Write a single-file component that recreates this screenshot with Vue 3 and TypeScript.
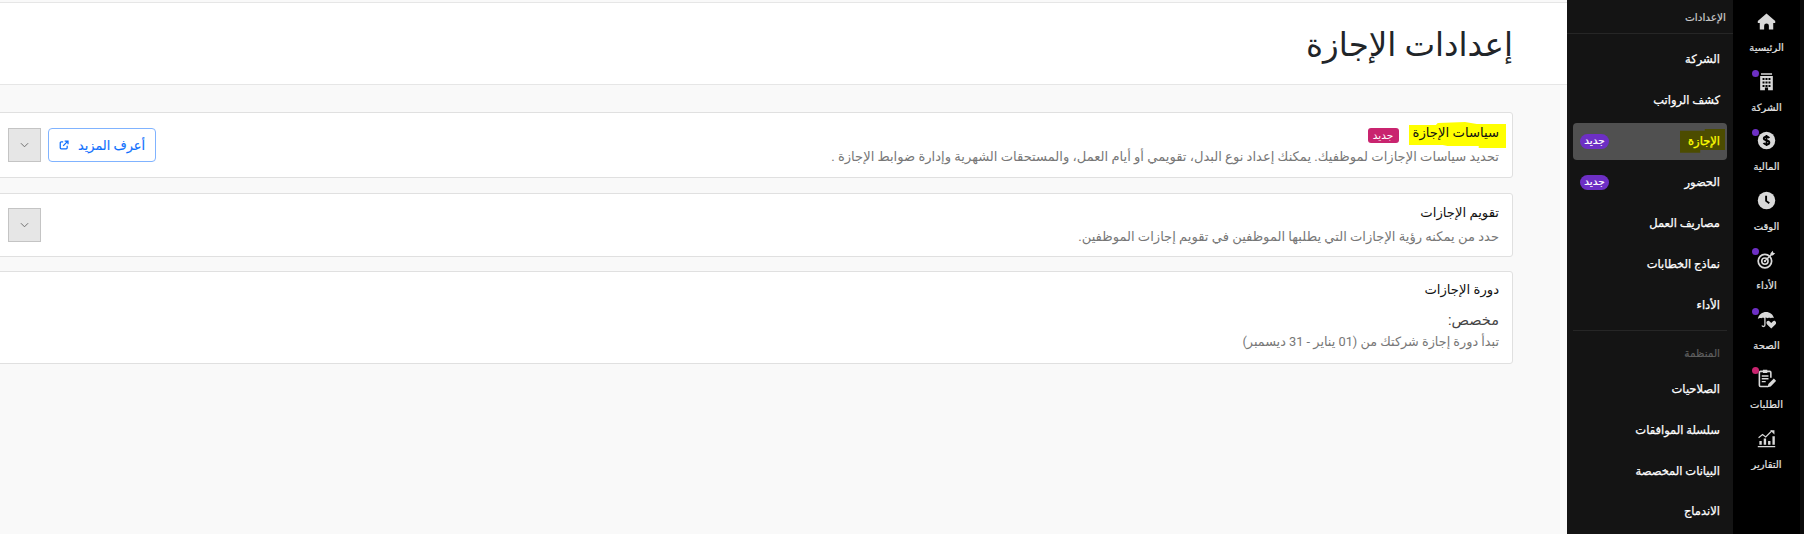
<template>
  <div class="page">
    <aside class="rail">
      <a v-for="item in railItems" :key="item.label" class="rail-item">
        <span v-if="item.dot" class="rail-dot" :class="'rail-dot--' + item.dot" />
        <svg class="rail-icon" viewBox="0 0 24 24" v-html="item.icon" />
        <span class="rail-label">{{ item.label }}</span>
      </a>
    </aside>

    <nav class="sub-nav">
      <div class="sub-nav__title">الإعدادات</div>
      <div class="sub-nav__group">
        <a
          v-for="link in mainLinks"
          :key="link.label"
          class="sub-nav__link"
          :class="{ 'sub-nav__link--active': link.active }"
        >
          <i v-if="link.active" class="sub-nav__mark" />
          <span class="sub-nav__label">{{ link.label }}</span>
          <span v-if="link.isNew" class="pill">جديد</span>
        </a>
      </div>
      <div class="sub-nav__divider" />
      <div class="sub-nav__heading">المنظمة</div>
      <a v-for="link in orgLinks" :key="link" class="sub-nav__link">
        <span class="sub-nav__label">{{ link }}</span>
      </a>
    </nav>

    <main class="content">
      <header class="content__header">
        <h1>إعدادات الإجازة</h1>
      </header>

      <section class="cards">
        <article class="card card--policies">
          <div class="card__body">
            <div class="card__title-row">
              <span class="card__title">
                <i class="card__mark" />
                <span class="card__title-text">سياسات الإجازة</span>
              </span>
              <span class="badge">جديد</span>
            </div>
            <p class="card__desc">
              تحديد سياسات الإجازات لموظفيك. يمكنك إعداد نوع البدل، تقويمي أو أيام العمل، والمستحقات الشهرية وإدارة ضوابط الإجازة .
            </p>
          </div>
          <div class="card__actions">
            <button class="btn-more">
              أعرف المزيد
              <svg viewBox="0 0 12 12" class="btn-more__icon">
                <path d="M5 2.2H2.6A1.1 1.1 0 0 0 1.5 3.3v6.1a1.1 1.1 0 0 0 1.1 1.1h6.1a1.1 1.1 0 0 0 1.1-1.1V7" fill="none" stroke="currentColor" stroke-width="1.5" />
                <path d="M5 7.1 10 2M6.8 1.2h4v4" fill="none" stroke="currentColor" stroke-width="1.5" />
              </svg>
            </button>
            <button class="btn-toggle">
              <svg viewBox="0 0 10 6"><path d="M1 1l4 4 4-4" fill="none" stroke="currentColor" stroke-width="1.1" /></svg>
            </button>
          </div>
        </article>

        <article class="card">
          <div class="card__body">
            <div class="card__title-row">
              <span class="card__title">تقويم الإجازات</span>
            </div>
            <p class="card__desc">حدد من يمكنه رؤية الإجازات التي يطلبها الموظفين في تقويم إجازات الموظفين.</p>
          </div>
          <div class="card__actions">
            <button class="btn-toggle">
              <svg viewBox="0 0 10 6"><path d="M1 1l4 4 4-4" fill="none" stroke="currentColor" stroke-width="1.1" /></svg>
            </button>
          </div>
        </article>

        <article class="card card--cycle">
          <div class="card__title-row">
            <span class="card__title">دورة الإجازات</span>
          </div>
          <div class="card__sub">مخصص:</div>
          <p class="card__desc">تبدأ دورة إجازة شركتك من (01 يناير - 31 ديسمبر)</p>
        </article>
      </section>
    </main>
  </div>
</template>

<script setup lang="ts">
interface RailItem {
  label: string
  icon: string
  dot?: 'purple' | 'pink'
}

interface NavLink {
  label: string
  active?: boolean
  isNew?: boolean
}

const railItems: RailItem[] = [
  { label: 'الرئيسية', icon: '<path fill="currentColor" d="M12 2 1 11.5V14h2.500v8H9v-4.500a3 3 0 0 1 6 0V22h5.500v-8H23v-2.500z"/>' },
  {
    label: 'الشركة',
    dot: 'purple',
    icon: '<path fill="currentColor" fill-rule="evenodd" d="M5 1.500h14v2H5zM4 5h16v18h-6v-3.500h-4V23H4zm3 2.500v2.500h2.500V7.500zm3.700 0v2.500h2.600V7.500zm3.800 0v2.500H17V7.500zM7 12v2.500h2.500V12zm3.700 0v2.500h2.600V12zm3.800 0v2.500H17V12zM7 16.500V19h2.500v-2.500zm7.500 0V19H17v-2.500zm-3.800 0V19h2.600v-2.500z"/>'
  },
  {
    label: 'المالية',
    dot: 'purple',
    icon: '<circle cx="12" cy="12" r="11" fill="currentColor"/><path fill="none" stroke="#000" stroke-width="2.400" d="M15.500 8.800c-.6-1.100-1.900-1.600-3.500-1.600-2 0-3.400 1-3.400 2.400 0 3.200 7 1.600 7 4.800 0 1.400-1.500 2.400-3.600 2.400-1.700 0-3-.6-3.700-1.800M12 5v14"/>'
  },
  {
    label: 'الوقت',
    icon: '<circle cx="12" cy="12" r="11" fill="currentColor"/><path fill="none" stroke="#000" stroke-width="2.400" d="M11.500 6v6.500l4 3"/>'
  },
  {
    label: 'الأداء',
    dot: 'purple',
    icon: '<g fill="none" stroke="currentColor"><circle cx="10" cy="14" r="8.500" stroke-width="2.200"/><circle cx="10" cy="14" r="4" stroke-width="2"/><path stroke-width="1.800" d="M10 14 19 5"/></g><path fill="currentColor" d="m17 4 3-3 .5 2.500L23 4l-3 3-3-.5z"/><circle cx="10" cy="14" r="1.500" fill="currentColor"/>'
  },
  {
    label: 'الصحة',
    dot: 'purple',
    icon: '<path fill="currentColor" d="M1 11.500C2 5.500 7 2.500 11.500 2.500s9 3 10 8c-1.200-.8-2.800-.8-4 0-1.200-.8-2.800-.8-4 0-1.200-.8-2.800-.8-4 0-1.200-.8-2.800-.8-4 0-1.200-.8-3.300-.2-4.500 1z"/><path fill="none" stroke="currentColor" stroke-width="1.600" d="M10 10v9c0 2.200-2.800 2.500-3.800.5"/><path fill="currentColor" d="M18 23.500l-5.200-5.200c-2.600-2.700 1-6.300 3.300-3.800l1.900 1.800 1.900-1.800c2.300-2.500 5.900 1.100 3.300 3.800z"/>'
  },
  {
    label: 'الطلبات',
    dot: 'pink',
    icon: '<path fill="none" stroke="currentColor" stroke-width="2" d="M14 22H4.500A1.500 1.500 0 0 1 3 20.500v-16A1.500 1.500 0 0 1 4.500 3H16a1.500 1.500 0 0 1 1.500 1.500V11"/><path fill="currentColor" d="M7.500 1h5.500v4H7.500zM6 8h8.500v1.800H6zM6 11.500h8.500v1.800H6zM6 15h5v1.800H6zM13.500 23l.8-4 7-7 3 3-7 7z"/>'
  },
  {
    label: 'التقارير',
    icon: '<g fill="currentColor"><path d="M1 21.500h22V23H1zM3 15h3v5H3zM8.500 12h3v8h-3zM14 15h3v5h-3zM19.500 9h3v11h-3z"/></g><path fill="none" stroke="currentColor" stroke-width="1.500" d="M2 11l5-4 4 3 5-5 3-3"/><path fill="currentColor" d="M16.500 1.500H22V7z"/>'
  }
]

const mainLinks: NavLink[] = [
  { label: 'الشركة' },
  { label: 'كشف الرواتب' },
  { label: 'الإجازة', active: true, isNew: true },
  { label: 'الحضور', isNew: true },
  { label: 'مصاريف العمل' },
  { label: 'نماذج الخطابات' },
  { label: 'الأداء' }
]

const orgLinks: string[] = ['الصلاحيات', 'سلسلة الموافقات', 'البيانات المخصصة', 'الاندماج']
</script>

<style>
html,
body {
  margin: 0;
  background: #f9f9f9;
  overflow: hidden;
}
</style>

<style scoped>
.page {
  direction: rtl;
  display: flex;
  width: 1804px;
  height: 534px;
  overflow: hidden;
  padding-right: 4px;
  box-sizing: border-box;
  background: #0c0c0c;
  font-family: Roboto, "DejaVu Sans", sans-serif;
}

.rail {
  flex: 0 0 67px;
  background: #000;
  display: flex;
  flex-direction: column;
  padding-top: 12px;
}

.rail-item {
  position: relative;
  height: 59.5px;
  display: flex;
  flex-direction: column;
  align-items: center;
  color: #d9d9d9;
}

.rail-icon {
  width: 19px;
  height: 19px;
}

.rail-label {
  margin-top: 10px;
  font-size: 10px;
  line-height: 14px;
  color: #e4e4e4;
  -webkit-text-stroke: 0.2px #e4e4e4;
}

.rail-dot {
  position: absolute;
  top: -2px;
  left: 19px;
  width: 7px;
  height: 7px;
  border-radius: 50%;
}

.rail-dot--purple {
  background: #6d2fc4;
}

.rail-dot--pink {
  background: #c9246f;
}

.sub-nav {
  flex: 0 0 166px;
  background: #141414;
  color: #fff;
  box-sizing: border-box;
  padding: 0 6px;
}

.sub-nav__title {
  margin: 0 -6px;
  height: 33px;
  line-height: 36px;
  padding-right: 7px;
  font-size: 10.5px;
  color: #c9c9c9;
  -webkit-text-stroke: 0.2px #c9c9c9;
  border-bottom: 1px solid #262626;
}

.sub-nav__group {
  padding-top: 5px;
}

.sub-nav__link {
  position: relative;
  height: 40.9px;
  display: flex;
  align-items: center;
  justify-content: space-between;
  padding: 0 7px;
  border-radius: 4px;
  font-size: 11.5px;
  -webkit-text-stroke: 0.25px currentColor;
}

.sub-nav__link--active {
  box-sizing: border-box;
  height: 37px;
  margin: 2px 0;
  background: #505050;
  color: #ffff00;
}

.sub-nav__label {
  position: relative;
}

.sub-nav__mark {
  position: absolute;
  top: 6px;
  right: 2px;
  width: 45px;
  height: 24px;
  background: #4c4c00;
  clip-path: polygon(0 8%, 55% 8%, 55% 0, 100% 0, 100% 88%, 45% 88%, 45% 100%, 0 100%);
}

.pill {
  width: 29px;
  height: 15px;
  background: #6d2fc4;
  border-radius: 8px;
  color: #fff;
  font-size: 10.5px;
  line-height: 14px;
  text-align: center;
  -webkit-text-stroke: 0.2px #fff;
}

.sub-nav__divider {
  height: 1px;
  background: #262626;
  margin-top: 5px;
}

.sub-nav__heading {
  height: 23px;
  padding: 14px 7px 0;
  line-height: 18px;
  font-size: 10.5px;
  color: #5f5f5f;
  -webkit-text-stroke: 0.2px #5f5f5f;
}

.content {
  flex: 1;
  min-width: 0;
  background: #f9f9f9;
  color: #212529;
  padding-top: 2px;
  overflow: hidden;
}

.content__header {
  height: 83px;
  box-sizing: border-box;
  background: #fff;
  border-top: 1px solid #e6e6e6;
  border-bottom: 1px solid #e6e6e6;
  display: flex;
  align-items: center;
  padding: 2px 54px 0 0;
}

.content__header h1 {
  margin: 0;
  font-size: 32.5px;
  font-weight: 400;
  color: #212529;
}

.cards {
  display: flex;
  flex-direction: column;
  gap: 14px;
  margin: 27px 54px 0 -16px;
}

.card {
  display: flex;
  align-items: center;
  justify-content: space-between;
  height: 64px;
  box-sizing: border-box;
  background: #fff;
  border: 1px solid #e0e0e0;
  border-radius: 3px;
  padding: 0 13px 0 23px;
}

.card--policies {
  height: 66px;
  margin-bottom: 1px;
}

.card--cycle {
  display: block;
  height: 93px;
  padding-top: 8px;
}

.card__title-row {
  display: flex;
  align-items: center;
  gap: 14px;
}

.card__title {
  position: relative;
  font-size: 13.2px;
  line-height: 20px;
  color: #111;
}

.card__title-text {
  position: relative;
}

.card__mark {
  position: absolute;
  top: -1px;
  bottom: -5px;
  left: -4px;
  right: -7px;
  background: #ffff00;
  clip-path: polygon(0 12%, 28% 12%, 30% 4%, 58% 0, 70% 8%, 100% 8%, 100% 100%, 72% 100%, 72% 92%, 40% 92%, 35% 88%, 0 88%);
}

.badge {
  width: 31px;
  height: 15px;
  background: #c9246f;
  color: #fff;
  font-size: 10.5px;
  border-radius: 3px;
  line-height: 15px;
  text-align: center;
  margin-top: 4px;
}

.card__sub {
  margin-top: 11px;
  font-size: 14.5px;
  line-height: 20px;
  color: #444;
}

.card__desc {
  margin: 4px 0 0;
  font-size: 13.1px;
  line-height: 20px;
  color: #777;
}

.card--cycle .card__desc {
  margin-top: 1px;
  font-size: 12.8px;
}

.card__actions {
  display: flex;
  align-items: center;
  gap: 7px;
}

.btn-more {
  width: 108px;
  height: 34px;
  padding: 0;
  background: #fff;
  border: 1px solid #80b3ff;
  border-radius: 4px;
  color: #0d6efd;
  font-family: inherit;
  font-size: 12.8px;
  -webkit-text-stroke: 0.15px currentColor;
  white-space: nowrap;
  display: flex;
  align-items: center;
  justify-content: center;
  gap: 9px;
}

.btn-more__icon {
  width: 10px;
  height: 10px;
}

.btn-toggle {
  width: 33px;
  height: 34px;
  padding: 0;
  background: #e6e6e6;
  border: 1px solid #c4c4c4;
  color: #6f6f6f;
  display: flex;
  align-items: center;
  justify-content: center;
}

.btn-toggle svg {
  width: 9px;
  height: 6px;
}
</style>
